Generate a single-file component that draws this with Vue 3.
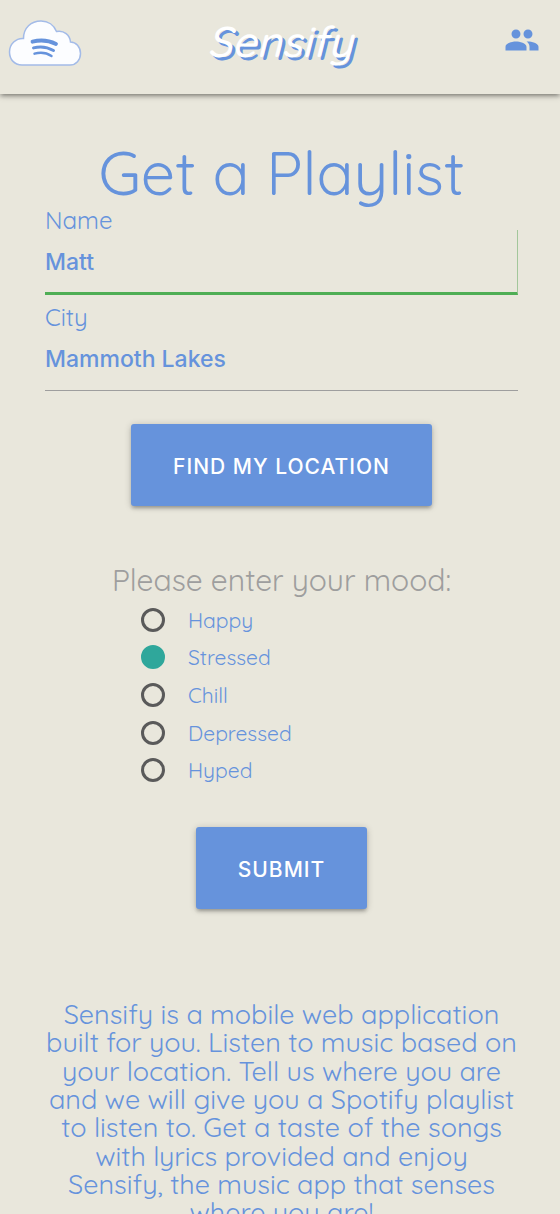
<script setup>
import { ref } from 'vue'

const name = ref('Matt')
const city = ref('Mammoth Lakes')
const mood = ref('Stressed')
const moods = ['Happy', 'Stressed', 'Chill', 'Depressed', 'Hyped']
</script>

<template>
  <div class="page">
    <header class="bar">
      <a href="#" class="logo" aria-label="Home">
        <svg width="74" height="48" viewBox="0 0 74 48">
          <path d="M14 46 C6 46 1.500 40 1.500 33 C1.500 25 8 19 15.500 19.500 C15.500 9 23 2 33 2 C40 2 46 6 48.500 12.500 C56 11 62 16 62.500 23 C68 23 72.500 28 72.500 34.500 C72.500 41 68 46 62 46 Z" fill="#fcfdff" stroke="#a3bbe8" stroke-width="1.500" />
          <g fill="none" stroke="#6693dc" stroke-linecap="round">
            <path d="M24.500 22.700 Q37 19.500 48 25" stroke-width="3.800" />
            <path d="M25.500 28.900 Q36 26 45.500 31.500" stroke-width="3" />
            <path d="M26.500 34.700 Q36 32 43.500 37" stroke-width="2.400" />
          </g>
        </svg>
      </a>
      <a href="#" class="brand">Sensify</a>
      <a href="#" class="people" aria-label="People">
        <svg width="36" height="36" viewBox="0 0 24 24" fill="#6693dc">
          <path d="M16 11c1.660 0 2.990-1.340 2.990-3S17.660 5 16 5c-1.660 0-3 1.340-3 3s1.340 3 3 3zm-8 0c1.660 0 2.990-1.340 2.990-3S9.660 5 8 5C6.340 5 5 6.340 5 8s1.340 3 3 3zm0 2c-2.330 0-7 1.170-7 3.500V19h14v-2.500c0-2.330-4.670-3.500-7-3.500zm8 0c-.290 0-.620.020-.970.050 1.160.840 1.970 1.970 1.970 3.450V19h6v-2.500c0-2.330-4.670-3.500-7-3.500z" />
        </svg>
      </a>
    </header>

    <main class="content">
      <h1>Get a Playlist</h1>
      <form @submit.prevent>
        <div class="field">
          <label for="name">Name</label>
          <input id="name" v-model="name" class="active" type="text" />
        </div>
        <div class="field">
          <label for="city">City</label>
          <input id="city" v-model="city" type="text" />
        </div>
        <button type="button" class="btn locate">Find my location</button>
        <fieldset>
          <legend>Please enter your mood:</legend>
          <div class="moods">
            <label v-for="m in moods" :key="m">
              <input v-model="mood" type="radio" name="mood" :value="m" />
              <span>{{ m }}</span>
            </label>
          </div>
        </fieldset>
        <button type="submit" class="btn submit">Submit</button>
      </form>
      <p class="about">
        Sensify is a mobile web application built for you. Listen to music based on your location. Tell us where you are and we will give you a Spotify playlist to listen to. Get a taste of the songs with lyrics provided and enjoy Sensify, the music app that senses where you are!
      </p>
    </main>
  </div>
</template>

<style>
body {
  background: #e9e7dc;
}
</style>

<style scoped>
.page {
  --blue: #6693dc;
  color: var(--blue);
  font-family: Quicksand, sans-serif;
  font-weight: 450;
}
.bar {
  display: grid;
  grid-template-columns: 1fr auto 1fr;
  box-sizing: border-box;
  height: 94px;
  padding: 0 8px;
  box-shadow: 0 3px 3px rgba(0, 0, 0, 0.14), 0 4px 2px -3px rgba(0, 0, 0, 0.12), 0 1px 7px rgba(0, 0, 0, 0.3);
}
.logo {
  margin-top: 19px;
}
.brand {
  margin-top: 11px;
  color: #fff;
  font-size: 43px;
  font-style: italic;
  font-weight: 500;
  line-height: 60px;
  text-decoration: none;
  text-shadow: 3px 3px 0 var(--blue);
}
.people {
  margin: 22px 12px 0 0;
  justify-self: end;
}
.content {
  display: flex;
  flex-direction: column;
  padding: 44px 42px 0 45px;
}
h1 {
  margin: 0;
  font-size: 61px;
  font-weight: 450;
  line-height: 68px;
  text-align: center;
  white-space: nowrap;
}
form {
  display: flex;
  flex-direction: column;
}
.field {
  display: flex;
  flex-direction: column;
  height: 97px;
}
.field label {
  font-size: 24px;
  line-height: 28px;
}
.field input {
  box-sizing: border-box;
  height: 60px;
  margin: 0;
  padding: 0 0 4px;
  border: 0;
  border-bottom: 1px solid #9e9e9e;
  border-radius: 0;
  outline: 0;
  background: transparent;
  color: var(--blue);
  font: 500 23px/28px Inter, sans-serif;
}
.field input.active {
  height: 65px;
  margin-top: -4px;
  padding: 2px 0 0;
  border-bottom: 3px solid #4fae55;
  border-right: 1px solid #a3c79b;
}
.btn {
  align-self: center;
  height: 82px;
  padding: 3px 42px 0;
  border: 0;
  border-radius: 3px;
  background: var(--blue);
  box-shadow: 0 3px 3px rgba(0, 0, 0, 0.14), 0 4px 2px -3px rgba(0, 0, 0, 0.12), 0 1px 7px rgba(0, 0, 0, 0.2);
  color: #fff;
  font: 500 21px/28px Inter, sans-serif;
  letter-spacing: 1px;
  text-transform: uppercase;
  white-space: nowrap;
}
.locate {
  margin-top: 24px;
}
fieldset {
  margin: 55px 0 0;
  padding: 0;
  border: 0;
}
legend {
  width: 100%;
  padding: 0;
  color: #9e9e9e;
  font-size: 30px;
  line-height: 38px;
  text-align: center;
}
.moods {
  display: grid;
  grid-template-rows: repeat(5, 1fr);
  height: 188px;
  margin: 2px 0 0 96px;
}
.moods label {
  display: flex;
  align-items: center;
  gap: 23px;
  font-size: 21px;
}
.moods input {
  appearance: none;
  box-sizing: border-box;
  width: 24px;
  height: 24px;
  margin: 0;
  border: 3px solid #5a5a5a;
  border-radius: 50%;
}
.moods input:checked {
  border-color: #2fa79b;
  background: #2fa79b;
}
.submit {
  margin-top: 38px;
}
.about {
  margin: 91px 0 0;
  font-size: 27px;
  font-weight: 400;
  line-height: 105%;
  text-align: center;
}
</style>
